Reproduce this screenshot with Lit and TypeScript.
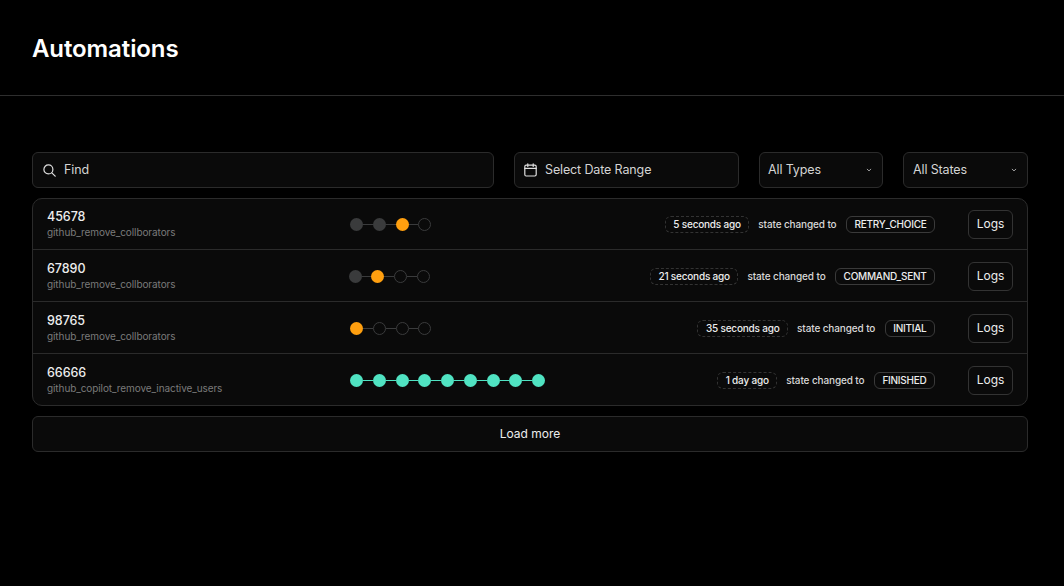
import { LitElement, html, css, svg } from "lit";
import { customElement } from "lit/decorators.js";

type Dot = "done" | "active" | "todo" | "ok";
interface Row {
  id: string;
  name: string;
  dots: Dot[];
  ago: string;
  state: string;
  shift?: boolean;
}

const rows: Row[] = [
  { id: "45678", name: "github_remove_collborators", dots: ["done", "done", "active", "todo"], ago: "5 seconds ago", state: "RETRY_CHOICE" },
  { id: "67890", name: "github_remove_collborators", dots: ["done", "active", "todo", "todo"], ago: "21 seconds ago", state: "COMMAND_SENT", shift: true },
  { id: "98765", name: "github_remove_collborators", dots: ["active", "todo", "todo", "todo"], ago: "35 seconds ago", state: "INITIAL" },
  { id: "66666", name: "github_copilot_remove_inactive_users", dots: Array(9).fill("ok"), ago: "1 day ago", state: "FINISHED" },
];

const chevron = svg`<svg class="chev" width="8" height="8" viewBox="0 0 8 8" fill="none" stroke="#a0a0a0" stroke-width="1" stroke-linecap="round" stroke-linejoin="round"><path d="M2.2 3.2 4 4.9l1.8-1.7"/></svg>`;

@customElement("app-root")
export class AppRoot extends LitElement {
  static styles = css`
    :host {
      display: block;
      min-height: 586px;
      background: #000;
      color: #ededed;
      font-family: Inter, "Liberation Sans", sans-serif;
    }
    .head {
      height: 96px;
      box-sizing: border-box;
      padding: 3px 32px 0;
      display: flex;
      align-items: center;
      border-bottom: 1px solid #2e2e2e;
    }
    h1 {
      margin: 0;
      font-size: 24px;
      line-height: 32px;
      font-weight: 600;
      color: #fff;
      letter-spacing: -0.1px;
    }
    .main {
      padding: 56px 36px 0 32px;
      display: flex;
      flex-direction: column;
    }
    .filters {
      display: grid;
      grid-template-columns: 462px 225px 124px 125px;
      column-gap: 20px;
    }
    .field {
      height: 36px;
      box-sizing: border-box;
      background: #0a0a0a;
      border: 1px solid #2b2b2b;
      border-radius: 6px;
      display: flex;
      align-items: center;
      font-size: 12.5px;
      color: #d4d4d4;
      letter-spacing: -0.13px;
    }
    .field span { padding-bottom: 1px; }
    .search { padding-left: 10px; gap: 8px; }
    .date { padding-left: 9px; gap: 8px; }
    .select { padding: 0 9px 0 8px; justify-content: space-between; }
    .select:last-child { padding-left: 9px; }
    .list {
      margin-top: 10px;
      background: #0a0a0a;
      border: 1px solid #2b2b2b;
      border-radius: 10px;
      overflow: hidden;
    }
    .row {
      height: 52px;
      box-sizing: border-box;
      padding: 1px 14px 0;
      display: grid;
      grid-template-columns: 303px 1fr auto;
      align-items: center;
      border-top: 1px solid #2b2b2b;
    }
    .row:first-child { height: 50px; padding-top: 0; border-top: 0; }
    .info { display: flex; flex-direction: column; padding-bottom: 1px; }
    .id { font-size: 12.5px; line-height: 16px; font-weight: 500; color: #ededed; letter-spacing: -0.05px; }
    .name { font-size: 10px; line-height: 14px; color: #7a7a7a; letter-spacing: -0.09px; }
    .steps { display: flex; align-items: center; }
    .steps.shift { margin-left: -1.5px; }
    .dot {
      width: 13px;
      height: 13px;
      box-sizing: border-box;
      border-radius: 50%;
      flex: none;
    }
    .dot.done { background: #3a3b3c; }
    .dot.active { background: #ff9f0f; }
    .dot.todo { border: 1px solid #3a3b3c; }
    .dot.ok { background: #50e3c2; }
    .link { width: 9.75px; height: 1px; background: #3a3b3c; flex: none; }
    .link.ok { background: #50e3c2; }
    .meta { display: flex; align-items: center; justify-content: flex-end; font-size: 10px; font-weight: 500; color: #d8d8d8; }
    .ago {
      height: 17px;
      box-sizing: border-box;
      padding: 0 7.5px;
      display: flex;
      align-items: center;
      border: 1px dashed #333;
      border-radius: 6px;
      color: #ededed;
      letter-spacing: -0.2px;
    }
    .changed { margin: 0 9.5px 0 9px; letter-spacing: -0.12px; }
    .state {
      height: 17px;
      box-sizing: border-box;
      padding: 0 7.5px;
      display: flex;
      align-items: center;
      border: 1px solid #3a3a3a;
      border-radius: 6px;
      color: #ededed;
      letter-spacing: -0.25px;
    }
    .logs {
      width: 45px;
      height: 29px;
      box-sizing: border-box;
      margin-left: 33px;
      background: transparent;
      border: 1px solid #333;
      border-radius: 6px;
      color: #ededed;
      font: inherit;
      font-size: 12px;
      font-weight: 400;
      padding: 0 0 1px;
    }
    .more {
      margin-top: 10px;
      height: 36px;
      box-sizing: border-box;
      background: #0a0a0a;
      border: 1px solid #2b2b2b;
      border-radius: 6px;
      color: #ededed;
      font: inherit;
      font-size: 12px;
      padding: 0 0 2px;
    }
  `;

  private steps(r: Row) {
    return html`<div class="steps ${r.shift ? "shift" : ""}">
      ${r.dots.map(
        (d, i) => html`${i > 0 ? html`<span class="link ${d === "ok" ? "ok" : ""}"></span>` : ""}<span class="dot ${d}"></span>`
      )}
    </div>`;
  }

  render() {
    return html`
      <header class="head"><h1>Automations</h1></header>
      <main class="main">
        <div class="filters">
          <div class="field search">
            <svg width="13" height="13" viewBox="0 0 13 13" fill="none" stroke="#e0e0e0" stroke-width="1.2" stroke-linecap="round"><circle cx="5.4" cy="5.4" r="4.5"/><path d="M8.8 8.8l3.4 3.4"/></svg>
            <span>Find</span>
          </div>
          <div class="field date">
            <svg width="13" height="14" viewBox="0 0 13 14" fill="none" stroke="#e0e0e0" stroke-width="1.2" stroke-linecap="round"><rect x=".8" y="2.2" width="11.4" height="10.8" rx="1.4"/><path d="M.8 5.4h11.4M3.8 .8v2.6M9.2 .8v2.6"/></svg>
            <span>Select Date Range</span>
          </div>
          <div class="field select"><span>All Types</span>${chevron}</div>
          <div class="field select"><span>All States</span>${chevron}</div>
        </div>
        <div class="list">
          ${rows.map(
            (r) => html`<div class="row">
              <div class="info">
                <span class="id">${r.id}</span>
                <span class="name">${r.name}</span>
              </div>
              ${this.steps(r)}
              <div class="meta">
                <span class="ago">${r.ago}</span>
                <span class="changed">state changed to</span>
                <span class="state">${r.state}</span>
                <button class="logs">Logs</button>
              </div>
            </div>`
          )}
        </div>
        <button class="more">Load more</button>
      </main>
    `;
  }
}
